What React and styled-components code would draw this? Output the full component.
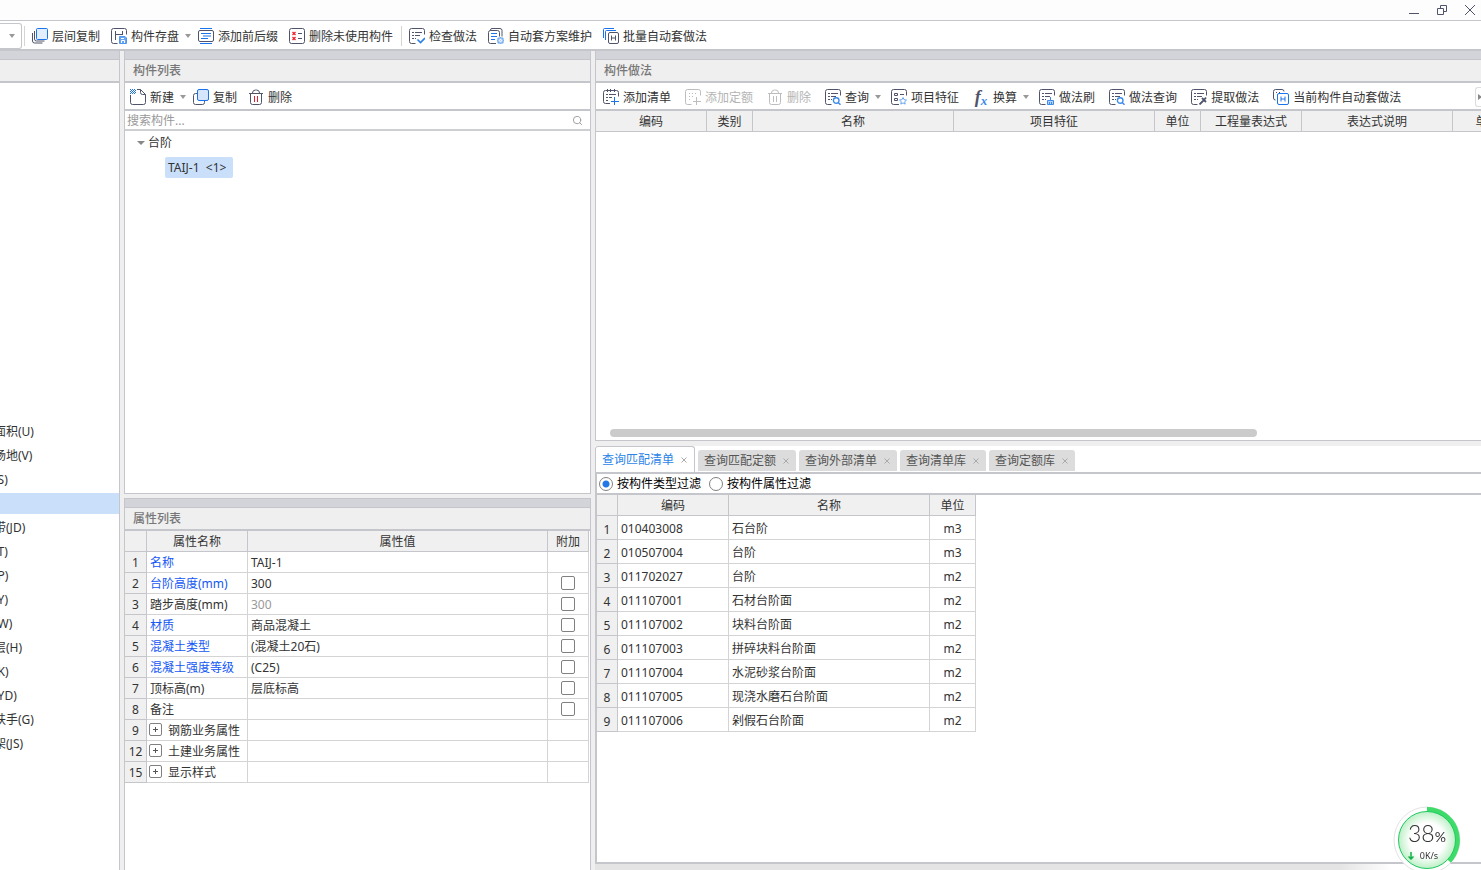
import React, { useState } from 'react';
import styled, { createGlobalStyle, css } from 'styled-components';
import { Search } from 'lucide-react';

const INK = '#50546a'
const BLUE = '#1a73e8'
const LINE = '#c4c6cb'
const PANE = '#efefef'

const GlobalStyle = createGlobalStyle`
	* {
		box-sizing: border-box;
	}
	body {
		margin: 0;
		overflow: hidden;
		background: #fff;
		color: #333;
		font: 12px/20px "Noto Sans", "Noto Sans CJK SC", sans-serif;
	}
	button, input {
		margin: 0;
		padding: 0;
		border: 0;
		background: none;
		color: inherit;
		font: inherit;
	}
`

const Window = styled.div`
	display: flex;
	flex-direction: column;
	height: 100vh;
	background: ${PANE};
`

const TitleBar = styled.header`
	display: flex;
	justify-content: flex-end;
	gap: 12px;
	height: 21px;
	padding-right: 3px;
	background: #fdfdfd;
	border-bottom: 1px solid ${LINE};
`

const WindowButton = styled.button`
	display: flex;
	align-items: center;
	justify-content: center;
	width: 16px;
	height: 20px;
`

const Toolbar = styled.div`
	display: flex;
	flex: none;
	align-items: center;
	height: 28px;
	padding-top: 2px;
	background: #fff;
	border-bottom: 2px solid ${LINE};
	overflow: hidden;
`

const MainToolbar = styled(Toolbar)`
	height: 30px;
`

const ToolButton = styled.button`
	display: flex;
	flex: none;
	align-items: center;
	gap: 4px;
	padding: ${props => props.$wide ? '0 7px' : '0 6px 0 5px'};
	white-space: nowrap;
	${props => props.$menu && css`
		padding-right: ${props.$wide ? 3 : 2}px;
	`}
	&:disabled {
		color: #b4b4b4;
	}
`

const ToolLabel = styled.span`
	padding-top: 2px;
	line-height: 18px;
`

const Caret = styled.span`
	width: 0;
	margin-left: 2px;
	border: 3px solid transparent;
	border-top: 4px solid #999;
	border-bottom: 0;
`

const Separator = styled.span`
	width: 1px;
	height: 20px;
	margin: 0 2px;
	background: #d5d5d5;
`

const ComboEnd = styled.button`
	display: flex;
	align-items: center;
	justify-content: center;
	width: 22px;
	height: 26px;
	border: 1px solid ${LINE};
	border-left: 0;
	border-radius: 0 3px 3px 0;
`

const More = styled.button`
	flex: none;
	width: 6px;
	height: 20px;
	margin-left: auto;
	padding-left: 2px;
	border: 1px solid #ddd;
	border-right: 0;
	border-radius: 3px 0 0 3px;
	&::before {
		content: '';
		display: block;
		width: 0;
		border: 3px solid transparent;
		border-left: 4px solid #888;
		border-right: 0;
	}
`

const Svg = styled.svg`
	flex: none;
	display: block;
	fill: none;
	stroke: ${props => props.$off ? '#bdbdbd' : INK};
	stroke-width: 1;
`

const Workspace = styled.main`
	display: grid;
	flex: 1;
	grid-template-columns: 120px 467px minmax(0, 1fr);
	gap: 4px;
	min-height: 0;
`

const Column = styled.div`
	display: flex;
	flex-direction: column;
	gap: 4px;
	min-width: 0;
	min-height: 0;
`

const WideColumn = styled(Column)`
	gap: 5px;
`

const QueryArea = styled.div`
	display: flex;
	flex-direction: column;
	flex: 424 1 0;
	min-height: 0;
`

const Panel = styled.section`
	display: flex;
	flex-direction: column;
	flex: ${props => props.$share || 1} 1 0;
	min-height: 0;
	background: #fff;
	overflow: hidden;
	border: 0 solid ${LINE};
	border-width: ${props => props.$edges || '0'};
`

const Grip = styled.div`
	flex: none;
	height: 9px;
	background: #d3d4da;
	border-bottom: 1px solid ${LINE};
`

const PanelTitle = styled.h2`
	flex: none;
	height: 23px;
	margin: 0;
	padding-left: 8px;
	background: ${PANE};
	border-bottom: 2px solid ${LINE};
	color: #777;
	font-size: 12px;
	font-weight: 500;
	line-height: 22px;
`

const MenuList = styled.ul`
	margin: 0 0 0 -30px;
	padding: 336px 0 0;
	list-style: none;
`

const MenuItem = styled.li`
	height: 21px;
	margin: 2px 0 3px;
	line-height: 22px;
	white-space: nowrap;
	background: ${props => props.$active ? '#c9dffa' : 'none'};
`

const SearchBar = styled.label`
	display: flex;
	flex: none;
	align-items: center;
	height: 20px;
	padding-right: 7px;
	border-bottom: 2px solid #cdcfd2;
`

const SearchInput = styled.input`
	flex: 1;
	height: 18px;
	padding: 2px 0 0 2px;
	outline: 0;
	&::placeholder {
		color: #999;
		opacity: 1;
	}
`

const Tree = styled.div`
	flex: 1;
	padding-left: 12px;
`

const TreeRow = styled.div`
	display: flex;
	align-items: center;
	gap: 3px;
	height: 24px;
	padding-left: ${props => props.$level * 28}px;
	line-height: 22px;
`

const TreeCaret = styled.span`
	width: 0;
	border: 4px solid transparent;
	border-top: 4px solid #888;
	border-bottom: 0;
`

const TreeChip = styled.span`
	height: 21px;
	padding: 0 7px 0 3px;
	border-radius: 2px;
	background: #c9dffa;
	white-space: pre;
`

const Grid = styled.table`
	flex: none;
	table-layout: fixed;
	border-collapse: separate;
	border-spacing: 0;
	width: ${props => props.$width};
	line-height: 18px;
`

const Th = styled.th`
	height: 21px;
	padding: 2px 0 0;
	background: #f0f0f0;
	border-right: 1px solid ${LINE};
	border-bottom: 1px solid ${LINE};
	font-weight: 400;
	overflow: hidden;
	white-space: nowrap;
`

const Td = styled.td`
	height: ${props => props.$tall ? 24 : 21}px;
	padding: 2px 3px 0;
	border-right: 1px solid #d4d4d4;
	border-bottom: 1px solid #d4d4d4;
	white-space: nowrap;
	text-align: ${props => props.$center ? 'center' : 'left'};
	color: ${props => props.$color || 'inherit'};
	${props => props.$index && css`
		padding: ${props.$tall ? 4 : 2}px 0 0;
		background: #f0f0f0;
		border-color: ${LINE};
		text-align: center;
	`}
	${props => props.$control && css`
		padding: 0 2px;
	`}
`

const CheckBox = styled.input.attrs({ type: 'checkbox' })`
	appearance: none;
	display: block;
	width: 14px;
	height: 14px;
	margin: 0 auto;
	border: 1px solid #808080;
	border-radius: 2px;
	background: #fff;
	&:checked {
		background: ${BLUE};
	}
`

const GroupName = styled.div`
	display: flex;
	align-items: center;
	gap: 6px;
`

const Expand = styled.button`
	width: 13px;
	height: 13px;
	border: 1px solid #808080;
	border-radius: 2px;
	background:
		linear-gradient(#555, #555) center / 5px 1px no-repeat,
		linear-gradient(#555, #555) center / 1px 5px no-repeat;
`

const ScrollTrack = styled.div`
	margin-top: auto;
	padding: 0 224px 3px 14px;
`

const ScrollThumb = styled.div`
	height: 8px;
	border-radius: 4px;
	background: #cbcbcb;
`

const TabBar = styled.div`
	display: flex;
	flex: none;
	align-items: flex-end;
	gap: 3px;
	height: 28px;
	background: #fff;
	border-bottom: 2px solid ${LINE};
`

const Tab = styled.div`
	display: flex;
	align-items: center;
	height: 21px;
	margin-bottom: 1px;
	padding-left: 6px;
	border-radius: 3px 3px 0 0;
	background: #dcdcdc;
	color: #555;
	${props => props.$active && css`
		height: 26px;
		margin-bottom: 0;
		border: 1px solid ${LINE};
		border-bottom: 0;
		background: #fff;
		color: #2b84e8;
	`}
`

const TabClose = styled.button`
	display: flex;
	align-items: center;
	justify-content: center;
	width: 20px;
	height: 20px;
`

const FilterBar = styled.div`
	display: flex;
	flex: none;
	align-items: center;
	gap: 8px;
	height: 21px;
	padding-left: 2px;
	border-bottom: 2px solid ${LINE};
	color: #000;
`

const RadioLabel = styled.label`
	display: flex;
	align-items: center;
	gap: 4px;
`

const Radio = styled.input.attrs({ type: 'radio' })`
	appearance: none;
	width: 14px;
	height: 14px;
	border: 1px solid #808080;
	border-radius: 50%;
	background: #fff;
	&:checked {
		background: radial-gradient(circle, #2478e5 3px, #fff 4px);
	}
`

const StatusStrip = styled.footer`
	flex: none;
	height: 6px;
	background: linear-gradient(90deg, #e4e4e4 84%, #fff 90%);
`

const Meter = styled.div`
	position: fixed;
	right: 20px;
	bottom: -4px;
	width: 68px;
	height: 68px;
`

const MeterText = styled.div`
	position: absolute;
	inset: 0;
	display: flex;
	flex-direction: column;
	align-items: center;
	padding-top: 15px;
	color: #333;
`

const MeterValue = styled.div`
	font: 300 23px/24px Lato, sans-serif;
	small {
		font-size: 14px;
		font-weight: 400;
	}
`

const MeterRate = styled.div`
	display: flex;
	align-items: center;
	gap: 6px;
	padding-right: 8px;
	font-size: 9px;
	line-height: 14px;
`

const FxGlyph = styled.span`
	width: 16px;
	font: italic 700 18px/18px "Liberation Serif", serif;
	color: ${INK};
	sub {
		color: #3d8bea;
		font-size: 13px;
		line-height: 0;
		vertical-align: -2px;
	}
`

const Sheet = () => <path d="M6.5 15.5h-4a2 2 0 0 1-2-2v-11a2 2 0 0 1 2-2h11a2 2 0 0 1 2 2v4" />
const SheetLines = () => <path d="M3 4.5h2M6 4.5h7M3 7.5h2M6 7.5h5M3 10.5h2M6 10.5h1" />
const Lens = () => <path stroke="#3d8bea" strokeWidth="1.4" d="M14 11.5a2.8 2.8 0 1 1-5.6 0 2.8 2.8 0 0 1 5.6 0zM13.2 13.5l2.3 2.3" />
const Plus = () => <path d="M11.5 8v8M8 12.5h8" />

const drawings = {
	layerCopy: (
		<>
			<path d="M2.5 3v8a2 2 0 0 0 2 2h8M.5 5v8a2 2 0 0 0 2 2h8" />
			<rect x="4.5" y=".5" width="11" height="11" rx="1" fill="#e2eefd" stroke={BLUE} />
		</>
	),
	save: (
		<>
			<path d="M6.5 15.5h-4a2 2 0 0 1-2-2v-11a2 2 0 0 1 2-2h11a2 2 0 0 1 2 2v4M4.5 3v9M4.5 6.5h7M11.5 3v4" />
			<path d="M8.5 8.5H14l1.5 1.5v5.5h-7z" fill="#69a5f1" stroke="#4f97ee" />
			<path d="M10.5 15v-2.5h3V15M10 10.5h3" stroke="#fff" />
		</>
	),
	affix: (
		<>
			<rect x=".5" y="2.5" width="15" height="11" rx="1.5" />
			<path stroke={BLUE} d="M2 .5h12M2 15.5h12M3 5.5h10M5 8h8M3 10.5h7" />
		</>
	),
	removeUnused: (
		<>
			<rect x=".5" y=".5" width="15" height="15" rx="2" />
			<path d="M9 5.5h4M9 10.5h4" />
			<path stroke="#f02030" strokeWidth="1.3" d="M3.5 4l3 3M6.5 4l-3 3M3.5 9l3 3M6.5 9l-3 3" />
		</>
	),
	check: (
		<>
			<Sheet />
			<SheetLines />
			<path stroke="#2a7fe9" strokeWidth="1.6" d="M8.5 11.5l3 3L16 10" />
		</>
	),
	scheme: (
		<>
			<path d="M2.5 2.5V2A1.5 1.5 0 0 1 4 .5h8a2 2 0 0 1 2 2v6M8 15.5H2.5a2 2 0 0 1-2-2v-9a2 2 0 0 1 2-2h7a2 2 0 0 1 2 2v4" />
			<path stroke={BLUE} d="M3 5.5h6M3 8.5h6M3 11.5h4" />
			<path fill="#a9ccf8" stroke="#69a5f1" d="M12.5 9l1 1.2 1.6-.2-.2 1.5 1.1 1-1.1 1 .2 1.6-1.6-.2-1 1.1-1-1.1-1.6.2.2-1.6-1.1-1 1.1-1-.2-1.5 1.6.2z" />
			<circle cx="12.5" cy="12.5" r="1" stroke="#fff" />
		</>
	),
	batch: (
		<>
			<path stroke={BLUE} d="M.5 10V1.500a1 1 0 0 1 1-1H11M2.500 12V3.500a1 1 0 0 1 1-1H13" />
			<rect x="5.5" y="4.5" width="10" height="11" rx="1.5" />
			<path d="M8.5 7.500v5M12.500 7.500v5M8.500 10h4" />
		</>
	),
	create: (
		<>
			<path d="M.5 6v7.5a2 2 0 0 0 2 2h11a2 2 0 0 0 2-2v-8l-5-5H7M10.5.5v3a2 2 0 0 0 2 2h3" />
			<path stroke={BLUE} strokeDasharray="1 1" d="M0 .5h5M1 1.500h5M0 2.500h5M1 3.500h5M0 4.500h5" />
		</>
	),
	copy: (
		<>
			<path d="M4 4.5H2.500a2 2 0 0 0-2 2v7a2 2 0 0 0 2 2h7a2 2 0 0 0 2-2V12" />
			<rect x="4.5" y=".5" width="11" height="11" rx="1.5" fill="#d5e5fc" stroke={BLUE} />
		</>
	),
	trash: <path d="M1 4.5h14M2.500 4.500v9a2 2 0 0 0 2 2h7a2 2 0 0 0 2-2v-9M4.500 4a3 3 0 0 1 3-3h1a3 3 0 0 1 3 3" />,
	addItem: (
		<>
			<path d="M7 14.5H2.500a2 2 0 0 1-2-2v-9a2 2 0 0 1 2-2h11a2 2 0 0 1 2 2v4M4.500 0v3M7.500 0v3M11.500 0v3M3 5.500h2M6 5.500h7M3 8.500h2M6 8.500h3M3 11.500h2" />
			<g stroke={BLUE}><Plus /></g>
		</>
	),
	addQuota: (
		<>
			<Sheet />
			<path strokeDasharray="1 2" d="M4 4.5h9M4 7.500h6M4 10.500h3" />
			<Plus />
		</>
	),
	query: (
		<>
			<Sheet />
			<SheetLines />
			<Lens />
		</>
	),
	feature: (
		<>
			<path d="M8 15.5H2.500a2 2 0 0 1-2-2v-11a2 2 0 0 1 2-2h11a2 2 0 0 1 2 2v4M3.500 4.500h3v2h-3zM3.500 9.500h3v2h-3zM9 5.500h4" />
			<path stroke="#69a5f1" d="M12 8.500l1.100 2.200 2.400.3-1.800 1.700.5 2.400-2.200-1.200-2.200 1.200.5-2.400L8.500 11l2.400-.3z" />
		</>
	),
	brush: (
		<>
			<Sheet />
			<SheetLines />
			<path stroke="#3d8bea" fill="#b5d3f9" d="M11.5 8v3M8.500 11.500h6v4h-6zM10.500 13v3M12.500 13v3" />
		</>
	),
	extract: (
		<>
			<Sheet />
			<SheetLines />
			<path strokeWidth="1.8" d="M8.5 15.500L13 11M11 9l4 4M13 11l2-2.500" />
		</>
	),
	current: (
		<>
			<path d="M2.5 11a2 2 0 0 1-2-2V2.500a2 2 0 0 1 2-2H9a2 2 0 0 1 2 2M3 3.500h1M6 3.500h1" />
			<g stroke={BLUE}>
				<rect x="4.5" y="4.5" width="11" height="11" rx="1.5" />
				<path d="M8 7.500v5M12 7.500v5M8 10h4" />
			</g>
		</>
	),
}

const Icon = ({ name, off }) => {
	if (name === 'fx') {
		return <FxGlyph>f<sub>x</sub></FxGlyph>
	}
	return (
		<Svg width="16" height="16" viewBox="0 0 16 16" $off={off} aria-hidden="true">
			{drawings[name]}
			{name === 'trash' && <path stroke={off ? '#bdbdbd' : '#e02030'} d="M6.5 7v6M9.500 7v6" />}
		</Svg>
	)
}

const mainTools = [
	{ icon: 'layerCopy', label: '层间复制' },
	{ icon: 'save', label: '构件存盘', menu: true },
	{ icon: 'affix', label: '添加前后缀' },
	{ icon: 'removeUnused', label: '删除未使用构件' },
	null,
	{ icon: 'check', label: '检查做法' },
	{ icon: 'scheme', label: '自动套方案维护' },
	{ icon: 'batch', label: '批量自动套做法' },
]

const listTools = [
	{ icon: 'create', label: '新建', menu: true },
	{ icon: 'copy', label: '复制' },
	{ icon: 'trash', label: '删除' },
]

const methodTools = [
	{ icon: 'addItem', label: '添加清单' },
	{ icon: 'addQuota', label: '添加定额', off: true },
	{ icon: 'trash', label: '删除', off: true },
	{ icon: 'query', label: '查询', menu: true },
	{ icon: 'feature', label: '项目特征' },
	{ icon: 'fx', label: '换算', menu: true },
	{ icon: 'brush', label: '做法刷' },
	{ icon: 'query', label: '做法查询' },
	{ icon: 'extract', label: '提取做法' },
	{ icon: 'current', label: '当前构件自动套做法' },
]

const menuItems = [
	'建筑面积(U)', '平整场地(V)', '散水(S)', '台阶', '后浇带(JD)', '挑檐(T)', '雨篷(P)',
	'阳台(Y)', '屋面(W)', '保温层(H)', '栏板(K)', '压顶(YD)', '栏杆扶手(G)', '脚手架(JS)',
]

const properties = [
	{ no: 1, name: '名称', value: 'TAIJ-1', key: true },
	{ no: 2, name: '台阶高度(mm)', value: '300', key: true, extra: true },
	{ no: 3, name: '踏步高度(mm)', value: '300', dim: true, extra: true },
	{ no: 4, name: '材质', value: '商品混凝土', key: true, extra: true },
	{ no: 5, name: '混凝土类型', value: '(混凝土20石)', key: true, extra: true },
	{ no: 6, name: '混凝土强度等级', value: '(C25)', key: true, extra: true },
	{ no: 7, name: '顶标高(m)', value: '层底标高', extra: true },
	{ no: 8, name: '备注', value: '', extra: true },
	{ no: 9, name: '钢筋业务属性', group: true },
	{ no: 12, name: '土建业务属性', group: true },
	{ no: 15, name: '显示样式', group: true },
]

const methodColumns = [
	['编码', 111], ['类别', 46], ['名称', 201], ['项目特征', 201], ['单位', 46],
	['工程量表达式', 101], ['表达式说明', 151], ['单价', 70],
]

const tabs = ['查询匹配清单', '查询匹配定额', '查询外部清单', '查询清单库', '查询定额库']

const matches = [
	['010403008', '石台阶', 'm3'],
	['010507004', '台阶', 'm3'],
	['011702027', '台阶', 'm2'],
	['011107001', '石材台阶面', 'm2'],
	['011107002', '块料台阶面', 'm2'],
	['011107003', '拼碎块料台阶面', 'm2'],
	['011107004', '水泥砂浆台阶面', 'm2'],
	['011107005', '现浇水磨石台阶面', 'm2'],
	['011107006', '剁假石台阶面', 'm2'],
]

const renderTools = (tools, wide) => tools.map((tool, i) => (
	tool === null ? <Separator key={i} /> : (
		<ToolButton key={tool.label} $wide={wide} $menu={tool.menu} disabled={tool.off}>
			<Icon name={tool.icon} off={tool.off} />
			<ToolLabel>{tool.label}</ToolLabel>
			{tool.menu && <Caret />}
		</ToolButton>
	)
))

const propertyRow = (row) => (
	<tr key={row.no}>
		<Td $index>{row.no}</Td>
		{row.group ? (
			<Td $control>
				<GroupName>
					<Expand aria-label={`展开${row.name}`} />
					<ToolLabel>{row.name}</ToolLabel>
				</GroupName>
			</Td>
		) : <Td $color={row.key && '#1457f5'}>{row.name}</Td>}
		<Td $color={row.dim && '#999'}>{row.value}</Td>
		<Td $control>{row.extra && <CheckBox aria-label={`附加${row.name}`} />}</Td>
	</tr>
)

const SpeedMeter = () => (
	<Meter>
		<svg width="68" height="68" viewBox="0 0 68 68" aria-hidden="true">
			<defs>
				<radialGradient id="glow">
					<stop offset="60%" stopColor="#fff" />
					<stop offset="100%" stopColor="#bdf0c6" />
				</radialGradient>
			</defs>
			<circle cx="34" cy="34" r="33" fill="#fff" stroke="#e2e2e2" />
			<path d="M34 3.5A30.5 30.5 0 0 1 56 55" fill="none" stroke="#3ddc68" strokeWidth="5" />
			<circle cx="34" cy="34" r="28.5" fill="url(#glow)" stroke="#1fc962" />
		</svg>
		<MeterText>
			<MeterValue>38<small>%</small></MeterValue>
			<MeterRate>
				<svg width="6" height="8" viewBox="0 0 6 8" fill="none" stroke="#12b048" aria-hidden="true">
					<path d="M3 0v7M.5 4.5L3 7l2.5-2.500" strokeWidth="1.5" />
				</svg>
				0K/s
			</MeterRate>
		</MeterText>
	</Meter>
)

const App = () => {
	const [tab, setTab] = useState(tabs[0])
	const [filter, setFilter] = useState('type')

	return (
		<Window>
			<GlobalStyle />
			<TitleBar>
				<WindowButton aria-label="最小化">
					<Svg width="10" height="10"><path d="M0 8.5h10" /></Svg>
				</WindowButton>
				<WindowButton aria-label="还原">
					<Svg width="10" height="10"><path d="M.5 3.5h6v6h-6zM3.5 3V.5h6v6H7" /></Svg>
				</WindowButton>
				<WindowButton aria-label="关闭">
					<Svg width="10" height="10"><path d="M0 0l10 10M10 0L0 10" /></Svg>
				</WindowButton>
			</TitleBar>
			<MainToolbar>
				<ComboEnd aria-label="选择楼层"><Caret /></ComboEnd>
				<Separator />
				{renderTools(mainTools)}
			</MainToolbar>
			<Workspace>
				<Panel $edges="0 1px 0 0">
					<Grip />
					<PanelTitle />
					<MenuList>
						{menuItems.map(item => <MenuItem key={item} $active={item === '台阶'}>{item}</MenuItem>)}
					</MenuList>
				</Panel>
				<Column>
					<Panel $share={443} $edges="0 1px 1px">
						<Grip />
						<PanelTitle>构件列表</PanelTitle>
						<Toolbar>{renderTools(listTools)}</Toolbar>
						<SearchBar>
							<SearchInput placeholder="搜索构件..." aria-label="搜索构件" />
							<Search size={11} color="#999" />
						</SearchBar>
						<Tree>
							<TreeRow $level={0}><TreeCaret />台阶</TreeRow>
							<TreeRow $level={1}><TreeChip>TAIJ-1  &lt;1&gt;</TreeChip></TreeRow>
						</Tree>
					</Panel>
					<Panel $share={372} $edges="1px 1px 0">
						<Grip />
						<PanelTitle>属性列表</PanelTitle>
						<Grid $width="calc(100% - 1px)">
							<colgroup>
								<col width="22" />
								<col width="101" />
								<col />
								<col width="41" />
							</colgroup>
							<thead>
								<tr>
									<Th />
									<Th>属性名称</Th>
									<Th>属性值</Th>
									<Th>附加</Th>
								</tr>
							</thead>
							<tbody>{properties.map(propertyRow)}</tbody>
						</Grid>
					</Panel>
				</Column>
				<WideColumn>
					<Panel $share={389} $edges="0 0 1px 1px">
						<Grip />
						<PanelTitle>构件做法</PanelTitle>
						<Toolbar>
							{renderTools(methodTools, true)}
							<More aria-label="更多" />
						</Toolbar>
						<Grid $width="927px">
							<thead>
								<tr>
									{methodColumns.map(([name, width]) => <Th key={name} width={width}>{name}</Th>)}
								</tr>
							</thead>
						</Grid>
						<ScrollTrack><ScrollThumb /></ScrollTrack>
					</Panel>
					<QueryArea>
						<TabBar role="tablist">
							{tabs.map(name => (
								<Tab key={name} $active={name === tab}>
									<button role="tab" aria-selected={name === tab} onClick={() => setTab(name)}>{name}</button>
									<TabClose aria-label={`关闭${name}`}>
										<Svg width="6" height="6"><path stroke="#aaa" d="M.5.5l5 5M5.500.5l-5 5" /></Svg>
									</TabClose>
								</Tab>
							))}
						</TabBar>
						<Panel $edges="0 0 2px 2px">
							<FilterBar>
								<RadioLabel>
									<Radio name="filter" checked={filter === 'type'} onChange={() => setFilter('type')} />
									按构件类型过滤
								</RadioLabel>
								<RadioLabel>
									<Radio name="filter" checked={filter === 'attr'} onChange={() => setFilter('attr')} />
									按构件属性过滤
								</RadioLabel>
							</FilterBar>
							<Grid $width="379px">
								<thead>
									<tr>
										<Th width="21" />
										<Th width="111">编码</Th>
										<Th width="201">名称</Th>
										<Th width="46">单位</Th>
									</tr>
								</thead>
								<tbody>
									{matches.map(([code, name, unit], i) => (
										<tr key={code}>
											<Td $tall $index>{i + 1}</Td>
											<Td $tall>{code}</Td>
											<Td $tall>{name}</Td>
											<Td $tall $center>{unit}</Td>
										</tr>
									))}
								</tbody>
							</Grid>
						</Panel>
						<StatusStrip />
					</QueryArea>
				</WideColumn>
			</Workspace>
			<SpeedMeter />
		</Window>
	)
}

export default App
